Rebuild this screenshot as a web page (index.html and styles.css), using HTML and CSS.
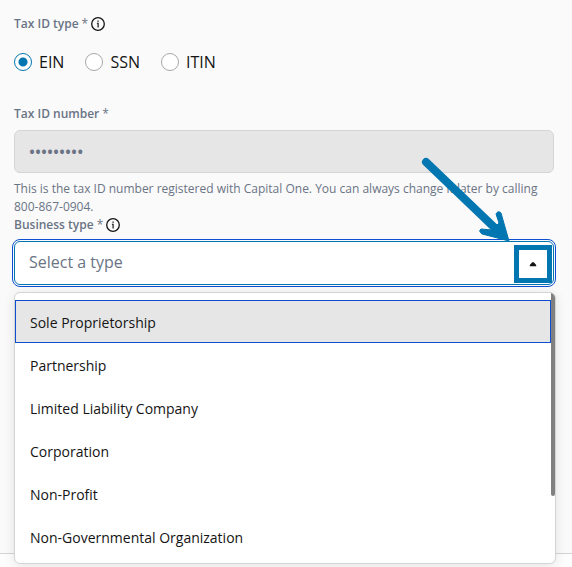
FILE: index.html
```
<!DOCTYPE html>
<html lang="en">
<head>
<meta charset="utf-8">
<meta name="viewport" content="width=device-width, initial-scale=1">
<title>Business tax information</title>
<link rel="stylesheet" href="styles.css">
</head>
<body>
<form class="panel">
  <fieldset class="radio-field">
    <legend class="label">Tax ID type <span class="star">*</span>
      <svg class="info" viewBox="0 0 14 14" aria-hidden="true"><circle cx="7" cy="7" r="6.3"/><path class="dot" d="M6.4 3.4h1.3v1.3H6.4zM5.9 5.8h1.8V10.4H6.5V6.7H5.9z"/></svg>
    </legend>
    <div class="radios">
      <label class="radio"><input type="radio" name="tax-type" checked>EIN</label>
      <label class="radio"><input type="radio" name="tax-type">SSN</label>
      <label class="radio"><input type="radio" name="tax-type">ITIN</label>
    </div>
  </fieldset>

  <div class="field">
    <label class="label" for="tax-id">Tax ID number <span class="star">*</span></label>
    <input class="text-input" id="tax-id" type="text" value="•••••••••" disabled>
    <p class="hint">This is the tax ID number registered with Capital One. You can always change it later by calling 800-867-0904.</p>
  </div>

  <div class="field">
    <label class="label" for="business-type">Business type <span class="star">*</span>
      <svg class="info" viewBox="0 0 14 14" aria-hidden="true"><circle cx="7" cy="7" r="6.3"/><path class="dot" d="M6.4 3.4h1.3v1.3H6.4zM5.9 5.8h1.8V10.4H6.5V6.7H5.9z"/></svg>
    </label>
    <div class="combo">
      <input class="combo-input" id="business-type" type="text" placeholder="Select a type" role="combobox" aria-expanded="true" aria-controls="business-list">
      <button class="toggle" type="button" aria-label="Close list">
        <svg viewBox="0 0 8 6" aria-hidden="true"><path d="M.8 5.2V4L3.2 1.2h1.6L7.2 4v1.2z"/></svg>
      </button>
      <svg class="pointer" viewBox="0 0 92 88" aria-hidden="true"><path class="shaft" d="M8 8L79 76"/><path class="head" d="M91 87L64 80Q60 77 63 75L74 76 81 69 78 60Q80 56 83 59Z"/></svg>
      <div class="menu">
        <ul class="options" id="business-list" role="listbox" aria-label="Business type">
          <li class="option active" role="option" aria-selected="true">Sole Proprietorship</li>
          <li class="option" role="option">Partnership</li>
          <li class="option" role="option">Limited Liability Company</li>
          <li class="option" role="option">Corporation</li>
          <li class="option" role="option">Non-Profit</li>
          <li class="option" role="option">Non-Governmental Organization</li>
        </ul>
        <span class="thumb"></span>
      </div>
    </div>
  </div>
</form>
</body>
</html>
```
FILE: styles.css
```
* {
  box-sizing: border-box;
}

body {
  min-height: 100vh;
  margin: 0;
  background: #fdfdfd;
  color: #141414;
  font-family: "Open Sans", sans-serif;
  font-size: 14px;
}

.panel {
  min-height: 554px;
  padding: 15px 18px 0 14px;
  background: #fafafa;
  border-bottom: 1px solid #d4d4d4;
}

.radio-field {
  margin: 0 0 33px;
  padding: 0;
  border: 0;
}

.label {
  display: flex;
  align-items: center;
  gap: 3px;
  padding: 0;
  color: #6a7485;
  font-size: 12px;
  font-weight: 600;
  line-height: 18px;
}

.star {
  font-weight: 400;
}

.info {
  width: 14px;
  height: 14px;
  fill: none;
  stroke: #141414;
  stroke-width: 1.3;
}

.info .dot {
  fill: #141414;
  stroke: none;
}

.radios {
  display: flex;
  gap: 21px;
  margin-top: 19px;
}

.radio {
  display: flex;
  align-items: center;
  gap: 7px;
  font-size: 16px;
  line-height: 20px;
}

.radio input {
  appearance: none;
  width: 18px;
  height: 18px;
  margin: 0;
  background: #fff;
  border: 1px solid #a8a8a8;
  border-radius: 50%;
}

.radio input:checked {
  background: radial-gradient(circle, #0276b1 4px, #fff 5px);
  border-color: #0276b1;
}

.text-input {
  display: block;
  width: 100%;
  height: 43px;
  margin-top: 7px;
  padding: 0 14px;
  background: #e6e6e6;
  border: 1px solid #d4d4d4;
  border-radius: 6px;
  color: #6a7485;
  font: 600 16px "Open Sans", sans-serif;
}

.hint {
  margin: 7px 0 0;
  color: #6a7485;
  font-size: 12px;
  line-height: 18px;
}

.combo {
  position: relative;
  margin-top: 7px;
}

.combo-input {
  display: block;
  width: 100%;
  height: 44px;
  padding: 0 44px 2px 14px;
  background: #fff;
  border: 1px solid #0276b1;
  border-radius: 6px;
  outline: 1px solid #0d4fd0;
  outline-offset: 1px;
  font: 16px "Open Sans", sans-serif;
}

.combo-input::placeholder {
  color: #6a7485;
  opacity: 1;
}

.toggle {
  position: absolute;
  top: 4px;
  right: 2px;
  display: grid;
  place-items: center;
  width: 38px;
  height: 38px;
  padding: 0;
  background: #fff;
  border: 5px solid #0276b1;
}

.toggle svg {
  width: 8px;
  height: 6px;
  fill: #141414;
}

.pointer {
  position: absolute;
  right: 44px;
  bottom: 43px;
  width: 92px;
  height: 88px;
}

.shaft {
  fill: none;
  stroke: #0276b1;
  stroke-width: 8;
  stroke-linecap: round;
}

.head {
  fill: #0276b1;
  stroke: #0276b1;
  stroke-linejoin: round;
}

.menu {
  position: absolute;
  top: 51px;
  left: 0;
  right: -2px;
  padding: 7px 4px 5px 0;
  background: #fff;
  border: 1px solid #d4d4d4;
  border-radius: 6px;
  box-shadow: 0 2px 12px rgb(0 0 0 / 10%);
  overflow: hidden;
}

.options {
  margin: 0;
  padding: 0;
  list-style: none;
}

.option {
  padding: 12px 14px 10px;
  border: 1px solid transparent;
  font-size: 14px;
  line-height: 19px;
}

.option.active {
  background: #e6e6e6;
  border-color: #0d4fd0;
}

.thumb {
  position: absolute;
  top: 0;
  right: 0;
  width: 4px;
  height: 75%;
  background: #808080;
  border-radius: 0 0 2px 2px;
}
```
